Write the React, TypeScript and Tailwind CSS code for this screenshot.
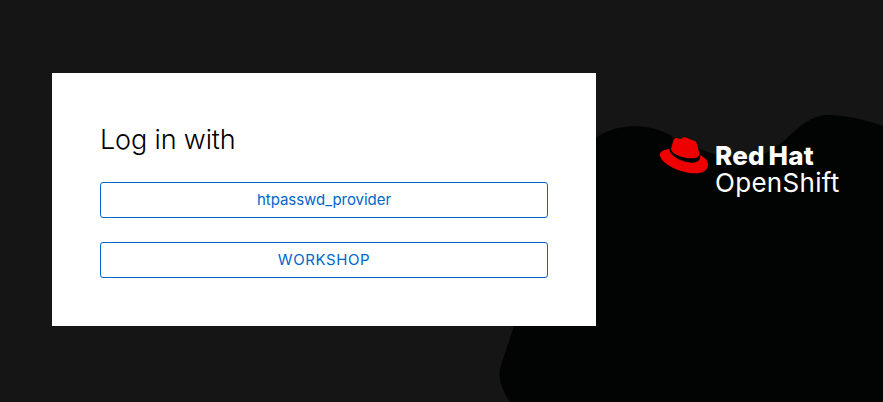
function Backdrop() {
  return (
    <svg className="absolute inset-0" width="883" height="402" viewBox="0 0 883 402" aria-hidden="true">
      <path
        fill="#020403"
        d="M510 402C500 387 497 374 502 362L514 326L560 190C571 158 590 140 602 134C624 123 648 125 666 133C690 144 709 156 735 158C755 160 770 153 785 140C804 122 814 115 829 115C847 115 866 120 883 126V402Z"
      />
    </svg>
  );
}

function Logo() {
  return (
    <div className="flex items-start text-white">
      <svg className="shrink-0" width="50" height="40" viewBox="15 15 150 120" aria-hidden="true">
        <g fill="#ee0000">
          <path d="M48 57L55 32C57 25 62 22 68 25C73 28 78 28 81 25C84 21 88 21 94 23L117 32C123 34 125 37 126 43L133 70C134 79 126 85 111 85C86 86 50 73 48 57Z" />
          <path d="M43 57C44 76 76 97 112 98C130 98 138 89 135 76C149 82 158 91 159 102C160 120 144 130 120 130C75 129 15 100 15 74C15 63 28 59 43 57Z" />
        </g>
      </svg>
      <div className="mt-[7px] ml-[5px] whitespace-nowrap">
        <div className="text-[26px] leading-[27px] font-extrabold tracking-[0.2px] [word-spacing:-2px]">Red Hat</div>
        <div className="text-[26px] leading-[28px] font-normal tracking-[0.3px]">OpenShift</div>
      </div>
    </div>
  );
}

function Provider({ name, tracking }: { name: string; tracking: string }) {
  return (
    <button className="flex h-9 w-full items-center justify-center rounded-[3px] border border-[#0066cc] text-[#0066cc]">
      <span className={`text-[15px] leading-6 ${tracking}`}>{name}</span>
    </button>
  );
}

export default function App() {
  return (
    <div className="relative h-[402px] w-[883px] overflow-hidden bg-[#151515] font-['Inter','Liberation_Sans',sans-serif]">
      <Backdrop />
      <div className="relative flex items-start pt-[73px] pl-[52px]">
        <main className="h-[253px] w-[544px] bg-white px-12 pt-[49px]">
          <h1 className="text-[27px] leading-9 font-[350] tracking-[-0.15px] whitespace-nowrap text-black">Log in with</h1>
          <div className="mt-6 flex flex-col gap-6">
            <Provider name="htpasswd_provider" tracking="tracking-[-0.05px]" />
            <Provider name="WORKSHOP" tracking="tracking-[0.6px]" />
          </div>
        </main>
        <header className="mt-[62px] ml-[64px]">
          <Logo />
        </header>
      </div>
    </div>
  );
}
